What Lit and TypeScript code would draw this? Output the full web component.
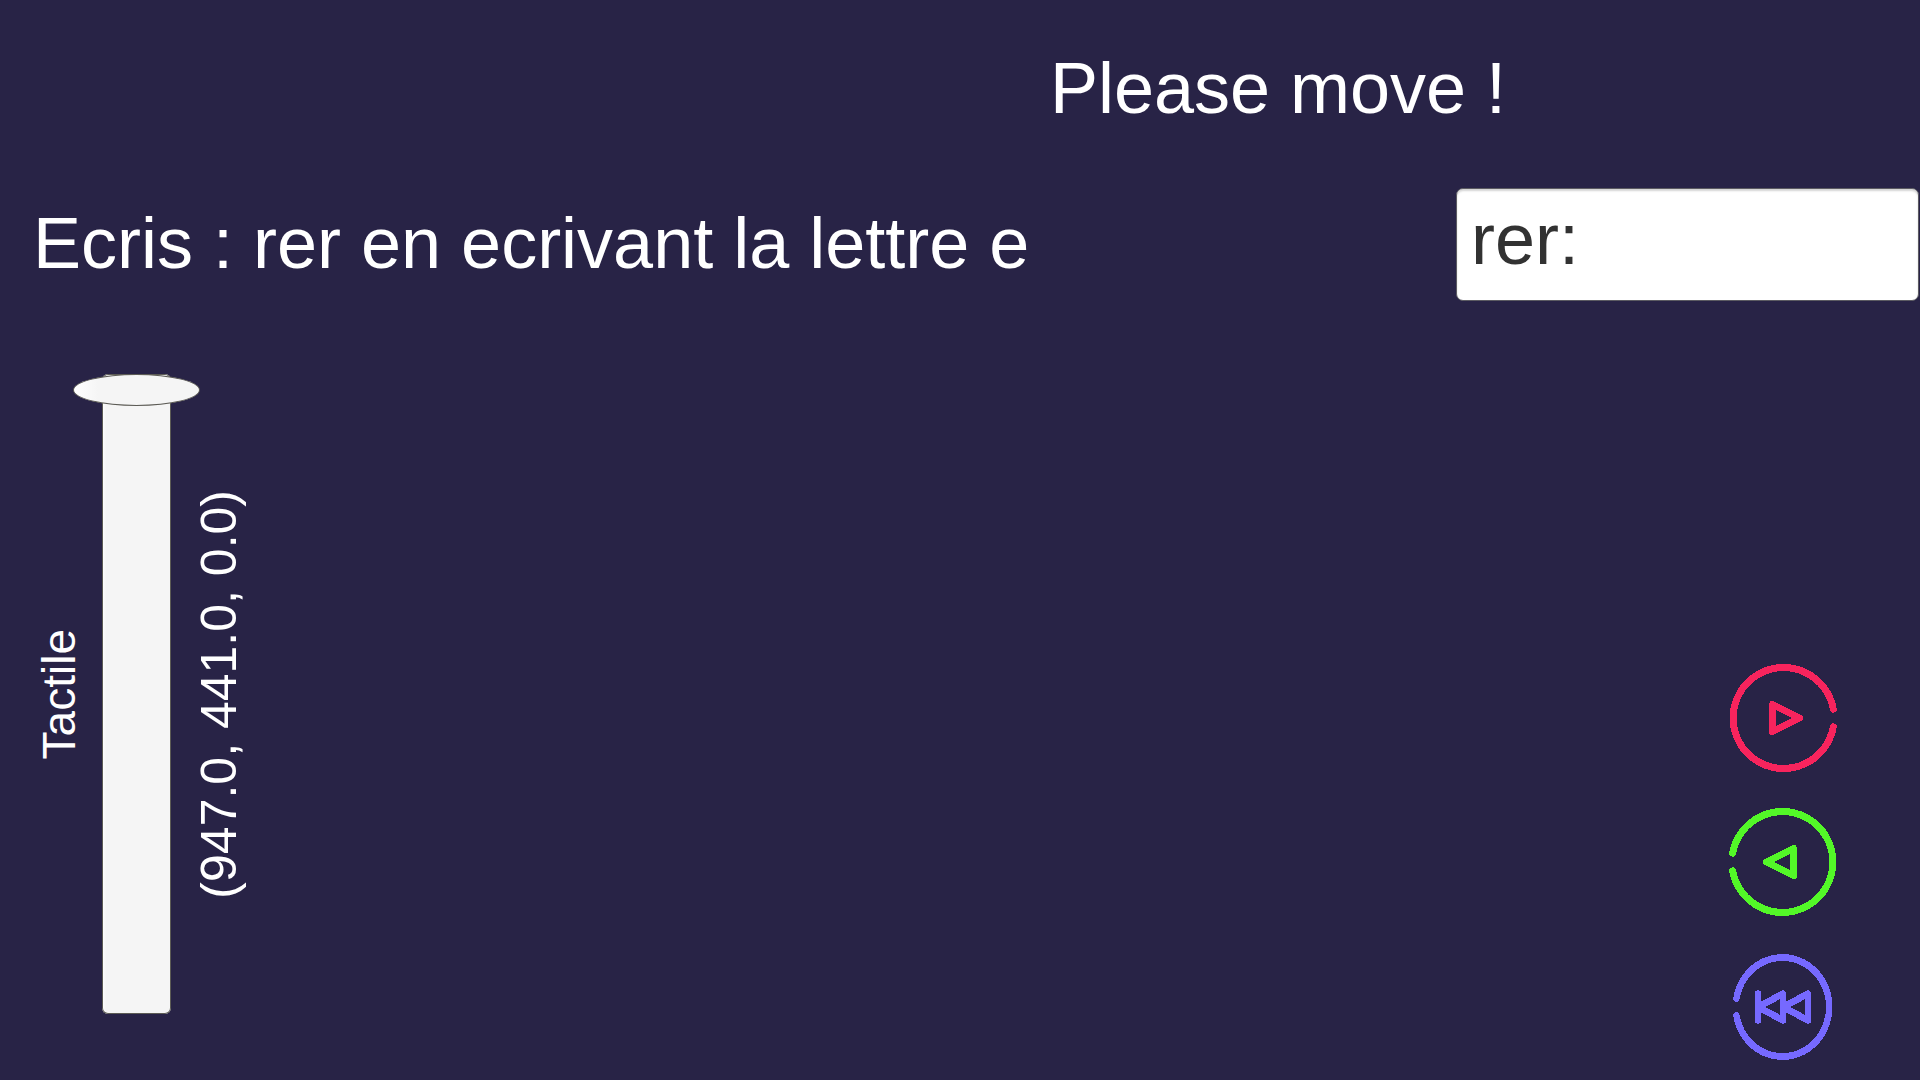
import { LitElement, html, css, svg } from "lit";
import { customElement, property, state } from "lit/decorators.js";

type IconName = "next" | "previous" | "restart";

@customElement("ring-icon")
class RingIcon extends LitElement {
  @property() name: IconName = "next";

  static styles = css`
    :host {
      display: block;
    }
    .icon {
      display: block;
      width: 100%;
      height: 100%;
      fill: none;
      stroke: currentColor;
      stroke-width: 7;
      stroke-linecap: round;
      stroke-linejoin: round;
      shape-rendering: crispEdges;
    }
  `;

  private shapes() {
    switch (this.name) {
      case "next":
        return svg`
          <path d="M104.3 45.2A50.5 50.5 0 1 0 104.3 62.8" />
          <path d="M43.5 40.5V67.5L70.5 54Z" />`;
      case "previous":
        return svg`
          <path d="M3.7 45.2A50.5 50.5 0 1 1 3.7 62.8" />
          <path d="M64.5 40.5V67.5L37.5 54Z" />`;
      default:
        return svg`
          <path d="M3.7 45.2A50.5 50.5 0 1 1 3.7 62.8" />
          <path d="M27 40.5V67.5M54 40.5V67.5L27 54ZM81 40.5V67.5L54 54Z" />`;
    }
  }

  render() {
    return html`<svg class="icon" viewBox="0 0 108 108" preserveAspectRatio="none" aria-hidden="true">
      ${this.shapes()}
    </svg>`;
  }
}

@customElement("app-root")
class AppRoot extends LitElement {
  @state() private level = 100;
  @state() private answer = "rer:";

  static styles = css`
    :host {
      display: block;
      color: #fff;
      background: #282346;
      font-family: "Liberation Sans", Arial, sans-serif;
    }
    *,
    *::before {
      box-sizing: border-box;
    }
    .page {
      display: flex;
      flex-direction: column;
      min-height: 100vh;
      padding-top: 46px;
    }
    .status {
      display: grid;
      grid-template-columns: 1fr 2fr;
      padding-right: 3px;
    }
    .title {
      grid-column: 2;
      margin: 0;
      font-size: 72px;
      font-weight: 400;
      line-height: 84px;
      text-align: center;
    }
    .exercise {
      display: flex;
      justify-content: space-between;
      align-items: center;
      margin-top: 58px;
      padding: 0 1px 0 33px;
    }
    .prompt {
      padding-bottom: 4px;
      font-size: 72px;
      line-height: 84px;
    }
    .answer {
      width: 463px;
      height: 113px;
      padding: 0 14px 12px;
      border: 1px solid #5c5b62;
      border-radius: 7px;
      outline: none;
      color: #323232;
      background: #fff;
      box-shadow: inset 0 2px 2px #d4d4d4;
      font: inherit;
      font-size: 72px;
    }
    .stage {
      flex: 1;
      display: flex;
      justify-content: space-between;
      margin-top: 73px;
      padding: 0 83px 0 33px;
    }
    .gauge {
      display: flex;
      align-items: center;
      padding-bottom: 66px;
    }
    .vertical {
      writing-mode: vertical-rl;
      transform: rotate(180deg);
      white-space: nowrap;
    }
    .gauge-label {
      font-size: 46px;
      line-height: 52px;
    }
    .position {
      font-size: 50px;
      line-height: 56px;
    }
    .slider {
      appearance: none;
      align-self: stretch;
      writing-mode: vertical-lr;
      direction: rtl;
      width: 69px;
      height: auto;
      min-height: 320px;
      margin: 0 20px 0 17px;
      border-radius: 6px;
      outline: none;
      background: linear-gradient(to right, #fff, #f5f5f5 4px);
      box-shadow: inset 0 0 0 1px #5c5b55;
    }
    .slider::-webkit-slider-runnable-track {
      width: 69px;
      height: 100%;
    }
    .slider::-webkit-slider-thumb {
      appearance: none;
      box-sizing: border-box;
      width: 127px;
      height: 32px;
      margin-left: -29px;
      border: 1px solid #5c5b55;
      border-radius: 50%;
      background: linear-gradient(to right, #fff, #f5f5f5 24px);
    }
    .actions {
      display: flex;
      flex-direction: column;
      justify-content: flex-end;
      gap: 36px;
      padding-bottom: 20px;
    }
    .action {
      display: flex;
      justify-content: center;
      align-items: flex-end;
      width: 108px;
      height: 108px;
      padding: 0;
      border: 0;
      background: none;
      cursor: pointer;
    }
    .next {
      color: #f7245d;
    }
    .previous {
      color: #53f728;
    }
    .restart {
      color: #7669ff;
    }
    .glyph {
      width: 108px;
      height: 108px;
    }
    .restart .glyph {
      width: 100px;
      height: 106px;
    }
  `;

  render() {
    return html`
      <main class="page">
        <header class="status">
          <h1 class="title">Please move !</h1>
        </header>
        <div class="exercise">
          <label class="prompt" for="answer">Ecris : rer en ecrivant la lettre e</label>
          <input
            class="answer"
            id="answer"
            type="text"
            autocomplete="off"
            spellcheck="false"
            .value=${this.answer}
            @input=${(e: Event) => (this.answer = (e.target as HTMLInputElement).value)}
          />
        </div>
        <div class="stage">
          <div class="gauge">
            <label class="gauge-label vertical" for="level">Tactile</label>
            <input
              class="slider"
              id="level"
              type="range"
              min="0"
              max="100"
              .value=${String(this.level)}
              @input=${(e: Event) => (this.level = Number((e.target as HTMLInputElement).value))}
            />
            <output class="position vertical" for="level">(947.0, 441.0, 0.0)</output>
          </div>
          <nav class="actions">
            <button class="action next" type="button" aria-label="Suivant">
              <ring-icon class="glyph" name="next"></ring-icon>
            </button>
            <button class="action previous" type="button" aria-label="Précédent">
              <ring-icon class="glyph" name="previous"></ring-icon>
            </button>
            <button class="action restart" type="button" aria-label="Recommencer">
              <ring-icon class="glyph" name="restart"></ring-icon>
            </button>
          </nav>
        </div>
      </main>
    `;
  }
}
